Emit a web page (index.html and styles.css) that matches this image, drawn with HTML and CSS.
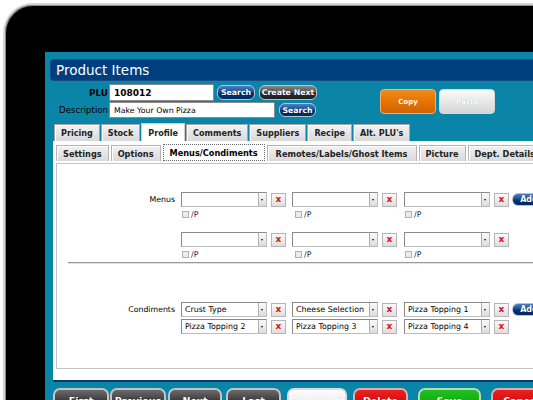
FILE: index.html
```html
<!DOCTYPE html>
<html>
<head>
<meta charset="utf-8">
<title>Product Items</title>
<link rel="stylesheet" href="styles.css">
</head>
<body>
<div class="device">
  <div class="screen">
    <div class="titlebar">Product Items</div>

    <div class="header">
      <div class="fields">
        <div class="row row-plu">
          <span class="lbl lbl-bold">PLU</span>
          <div class="input input-plu">108012</div>
          <span class="pill pill-blue pill-search1">Search</span>
          <span class="pill pill-dark pill-create">Create Next</span>
        </div>
        <div class="row row-desc">
          <span class="lbl">Description</span>
          <div class="input input-desc">Make Your Own Pizza</div>
          <span class="pill pill-blue pill-search2">Search</span>
        </div>
      </div>
      <div class="actions">
        <span class="big big-orange">Copy</span>
        <span class="big big-light">Paste</span>
      </div>
    </div>

    <div class="tabs">
      <span class="tab">Pricing</span>
      <span class="tab">Stock</span>
      <span class="tab tab-active">Profile</span>
      <span class="tab">Comments</span>
      <span class="tab">Suppliers</span>
      <span class="tab">Recipe</span>
      <span class="tab">Alt. PLU's</span>
    </div>

    <div class="panel">
      <div class="subtabs">
        <span class="subtab">Settings</span>
        <span class="subtab">Options</span>
        <span class="subtab subtab-active">Menus/Condiments</span>
        <span class="subtab subtab-wide">Remotes/Labels/Ghost Items</span>
        <span class="subtab">Picture</span>
        <span class="subtab">Dept. Details</span>
      </div>

      <div class="box">
        <div class="group group-menus">
          <span class="glabel">Menus</span>
          <div class="cell">
            <div class="ctl"><div class="sel"><span class="seltext"></span><span class="arr"></span></div><span class="xbtn">x</span></div>
            <div class="chk"><span class="cb"></span>/P</div>
          </div>
          <div class="cell">
            <div class="ctl"><div class="sel"><span class="seltext"></span><span class="arr"></span></div><span class="xbtn">x</span></div>
            <div class="chk chk-mid"><span class="cb"></span>/P</div>
          </div>
          <div class="cell">
            <div class="ctl"><div class="sel"><span class="seltext"></span><span class="arr"></span></div><span class="xbtn">x</span></div>
            <div class="chk"><span class="cb"></span>/P</div>
          </div>
          <span class="pill pill-blue addbtn">Add</span>

          <span class="gspacer"></span>
          <div class="cell">
            <div class="ctl"><div class="sel"><span class="seltext"></span><span class="arr"></span></div><span class="xbtn">x</span></div>
            <div class="chk"><span class="cb"></span>/P</div>
          </div>
          <div class="cell">
            <div class="ctl"><div class="sel"><span class="seltext"></span><span class="arr"></span></div><span class="xbtn">x</span></div>
            <div class="chk chk-mid"><span class="cb"></span>/P</div>
          </div>
          <div class="cell">
            <div class="ctl"><div class="sel"><span class="seltext"></span><span class="arr"></span></div><span class="xbtn">x</span></div>
            <div class="chk"><span class="cb"></span>/P</div>
          </div>
        </div>

        <div class="rule"></div>

        <div class="group group-cond">
          <span class="glabel">Condiments</span>
          <div class="cell">
            <div class="ctl"><div class="sel"><span class="seltext">Crust Type</span><span class="arr"></span></div><span class="xbtn">x</span></div>
          </div>
          <div class="cell">
            <div class="ctl"><div class="sel"><span class="seltext">Cheese Selection</span><span class="arr"></span></div><span class="xbtn">x</span></div>
          </div>
          <div class="cell">
            <div class="ctl"><div class="sel"><span class="seltext">Pizza Topping 1</span><span class="arr"></span></div><span class="xbtn">x</span></div>
          </div>
          <span class="pill pill-blue addbtn">Add</span>

          <span class="gspacer"></span>
          <div class="cell">
            <div class="ctl"><div class="sel"><span class="seltext">Pizza Topping 2</span><span class="arr"></span></div><span class="xbtn">x</span></div>
          </div>
          <div class="cell">
            <div class="ctl"><div class="sel"><span class="seltext">Pizza Topping 3</span><span class="arr"></span></div><span class="xbtn">x</span></div>
          </div>
          <div class="cell">
            <div class="ctl"><div class="sel"><span class="seltext">Pizza Topping 4</span><span class="arr"></span></div><span class="xbtn">x</span></div>
          </div>
        </div>
      </div>
    </div>

    <div class="footer">
      <span class="fbtn fbtn-dark fb-first">First</span>
      <span class="fbtn fbtn-dark fb-prev">Previous</span>
      <span class="fbtn fbtn-dark fb-next">Next</span>
      <span class="fbtn fbtn-dark fb-last">Last</span>
      <span class="fbtn fbtn-light fb-show">Show Last</span>
      <span class="fbtn fbtn-red fb-del">Delete</span>
      <span class="fbtn fbtn-green fb-save">Save</span>
      <span class="fbtn fbtn-red fb-cancel">Cancel</span>
    </div>
  </div>
</div>
</body>
</html>
```

FILE: styles.css
```css
html, body {
  margin: 0;
  padding: 0;
  width: 533px;
  height: 400px;
  overflow: hidden;
  background: #ffffff;
  font-family: "DejaVu Sans", Verdana, sans-serif;
}

.device {
  margin: 3px 0 0 3px;
  width: 640px;
  height: 480px;
  box-sizing: border-box;
  border: 2px solid #d4d4d4;
  box-shadow: inset 0 0 0 1px #8a8a8a;
  border-radius: 30px;
  background: #000000;
  padding: 47px 0 0 40px;
}

.screen {
  width: 600px;
  height: 420px;
  background: #0b85a7;
  padding: 7px 0 0 5px;
  box-sizing: border-box;
}

.titlebar {
  height: 22px;
  box-sizing: border-box;
  background: #003f7f;
  border: 1px solid #154c86;
  border-right: none;
  border-radius: 4px 0 0 4px;
  color: #ffffff;
  font-size: 13.5px;
  line-height: 20px;
  padding-left: 5px;
}

/* header */
.header {
  display: flex;
  padding-top: 3px;
  height: 37px;
  box-sizing: border-box;
}

.fields {
  display: flex;
  flex-direction: column;
  gap: 1px;
}

.row {
  display: flex;
  align-items: center;
}

.row-plu { height: 17px; }
.row-desc { height: 16px; }

.lbl {
  width: 59px;
  padding-right: 1px;
  box-sizing: border-box;
  text-align: right;
  font-size: 8.6px;
  color: #000000;
}

.lbl-bold {
  font-weight: bold;
  font-size: 8.8px;
}

.input {
  background: #ffffff;
  border: 1px solid #8a8a8a;
  box-sizing: border-box;
  display: flex;
  align-items: center;
  padding-left: 4px;
  color: #000000;
}

.input-plu {
  width: 105px;
  height: 17px;
  font-weight: bold;
  font-size: 9px;
}

.input-desc {
  width: 166px;
  height: 16px;
  font-size: 7.8px;
}

.pill {
  display: flex;
  align-items: center;
  justify-content: center;
  box-sizing: border-box;
  height: 15px;
  border-radius: 6px;
  border: 1px solid #b9c3cf;
  color: #ffffff;
  font-weight: bold;
  font-size: 7.8px;
  text-shadow: 0 0 1px rgba(0,0,0,0.6);
}

.pill-blue {
  background: linear-gradient(#4f7fc0 0%, #1a4f99 45%, #00306f 55%, #002a62 100%);
}

.pill-dark {
  background: linear-gradient(#8a8a8a 0%, #505050 45%, #2e2e2e 55%, #1e1e1e 100%);
}

.pill-search1 { width: 38px; margin-left: 3px; }
.pill-create { width: 58px; margin-left: 4px; }
.pill-search2 { width: 37px; margin-left: 4px; height: 14px; }

.actions {
  display: flex;
  gap: 3px;
  margin-left: 63px;
  margin-top: 5px;
}

.big {
  width: 56px;
  height: 25px;
  box-sizing: border-box;
  border-radius: 4px;
  display: flex;
  align-items: center;
  justify-content: center;
  color: #ffffff;
  font-weight: bold;
  font-size: 7px;
}

.big-orange {
  background: linear-gradient(#f08a22 0%, #e67300 50%, #d06400 100%);
  border: 1px solid #f5b070;
}

.big-light {
  background: linear-gradient(#fbfbfb 0%, #e8e8e8 50%, #d6d6d6 100%);
  border: 1px solid #d8d8d8;
  text-shadow: 0 0 1px rgba(0,0,0,0.25);
}

/* main tabs */
.tabs {
  display: flex;
  align-items: flex-end;
  gap: 1px;
  height: 23px;
  box-sizing: border-box;
  padding-left: 4px;
  padding-top: 5px;
}

.tab {
  height: 17px;
  box-sizing: border-box;
  padding: 0 6px;
  border: 1px solid #a6a6a6;
  border-bottom: none;
  box-shadow: inset 1px 1px 0 #ffffff;
  background: linear-gradient(#f3f3f3, #d9d9d9);
  color: #222222;
  font-weight: bold;
  font-size: 8.1px;
  display: flex;
  align-items: center;
}

.tab-active {
  height: 18px;
  background: #ffffff;
  box-shadow: none;
  border-color: #d0d0d0;
}

/* panel */
.panel {
  margin-left: 3px;
  width: 560px;
  height: 241px;
  box-sizing: border-box;
  background: #ffffff;
  border-bottom: 2px solid #0a3a66;
  padding: 3px 0 0 3px;
}

.subtabs {
  display: flex;
  align-items: flex-end;
  gap: 2px;
  height: 17px;
}

.subtab {
  height: 16px;
  box-sizing: border-box;
  padding: 0 6px;
  border: 1px solid #b4b4b4;
  border-bottom: none;
  box-shadow: inset 1px 1px 0 #ffffff;
  background: linear-gradient(#f1f1f1, #dadada);
  color: #222222;
  font-weight: bold;
  font-size: 8.2px;
  display: flex;
  align-items: center;
}

.subtab-wide { padding: 0 8px; }

.subtab-active {
  height: 17px;
  background: #ffffff;
  box-shadow: none;
  border: 1px dotted #6a6a6a;
  color: #000000;
}

.box {
  margin-top: 2px;
  height: 206px;
  box-sizing: border-box;
  border: 1px solid #c4c4c4;
  border-right: none;
  padding-top: 28px;
}

.group {
  display: grid;
  grid-template-columns: 124px 111px 112px 108px auto;
  align-items: start;
}

.group-menus {
  row-gap: 14px;
}

.group-cond {
  row-gap: 2px;
  margin-top: 38px;
}

.glabel {
  font-size: 7.8px;
  color: #000000;
  text-align: right;
  line-height: 15px;
  padding-right: 6px;
}

.gspacer { grid-column: 1; }

.cell {
  display: flex;
  flex-direction: column;
  gap: 3px;
}

.ctl {
  display: flex;
  align-items: center;
  gap: 4px;
}

.sel {
  width: 86px;
  height: 15px;
  box-sizing: border-box;
  border: 1px solid #9c9c9c;
  border-color: #8a8a8a #bdbdbd #bdbdbd #8a8a8a;
  background: #ffffff;
  display: flex;
  align-items: stretch;
}

.seltext {
  flex: 1;
  font-size: 7.9px;
  line-height: 13px;
  padding-left: 3px;
  color: #000000;
  white-space: nowrap;
  overflow: hidden;
}

.arr {
  width: 8px;
  box-sizing: border-box;
  border-left: 1px solid #b0b0b0;
  background: linear-gradient(#fbfbfb, #dcdcdc);
  position: relative;
}

.arr::after {
  content: "";
  position: absolute;
  left: 2px;
  top: 6px;
  border-left: 1.5px solid transparent;
  border-right: 1.5px solid transparent;
  border-top: 2px solid #111111;
}

.xbtn {
  width: 15px;
  height: 14px;
  box-sizing: border-box;
  border: 1px solid #b5b5b5;
  background: linear-gradient(#fafafa, #dedede);
  color: #e01010;
  font-weight: bold;
  font-size: 9px;
  line-height: 11px;
  text-align: center;
}

.chk {
  display: flex;
  align-items: center;
  gap: 2px;
  height: 8px;
  padding-left: 1px;
  font-size: 7.8px;
  color: #1c2340;
}

.chk-mid { padding-left: 3px; }

.cb {
  width: 7px;
  height: 7px;
  box-sizing: border-box;
  border: 1px solid #b0b0b0;
  background: #ececec;
}

.addbtn {
  width: 34px;
  margin-top: 1px;
  height: 13px;
  font-size: 8px;
}

.rule {
  margin: 4px 0 0 11px;
  border-top: 1px solid #9a9a9a;
  border-bottom: 1px solid #e2e2e2;
}

/* footer */
.footer {
  display: flex;
  margin-left: 3px;
  padding-top: 6px;
}

.fbtn {
  height: 26px;
  box-sizing: border-box;
  border: 2px solid #c4c4c4;
  border-radius: 7px;
  color: #ffffff;
  font-weight: bold;
  font-size: 9.5px;
  display: flex;
  justify-content: center;
  padding-top: 5px;
  text-shadow: 0 0 1px rgba(0,0,0,0.5);
}

.fbtn-dark { background: linear-gradient(#6a6a6a, #3a3a3a 50%, #262626); }
.fbtn-light { background: linear-gradient(#fcfcfc, #e6e6e6); border-color: #dcdcdc; text-shadow: 0 0 1px rgba(0,0,0,0.2); }
.fbtn-red { background: linear-gradient(#e82020, #c80000); border-color: #d8b0b0; }
.fbtn-green { background: linear-gradient(#20c020, #08a008); border-color: #b8d8b8; }

.fb-first { width: 56px; }
.fb-prev { width: 56px; margin-left: 1px; }
.fb-next { width: 54px; margin-left: 2px; }
.fb-last { width: 55px; margin-left: 4px; }
.fb-show { width: 60px; margin-left: 6px; }
.fb-del { width: 55px; margin-left: 6px; }
.fb-save { width: 63px; margin-left: 10px; }
.fb-cancel { width: 60px; margin-left: 10px; }
```
